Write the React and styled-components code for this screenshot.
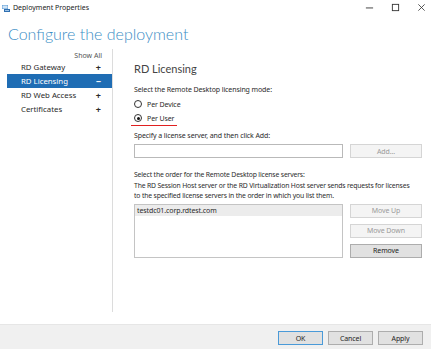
import styled, { createGlobalStyle } from 'styled-components';

const GlobalStyle = createGlobalStyle`
  html, body {
    margin: 0;
    padding: 0;
    background: #ffffff;
  }
  body {
    font-family: "Noto Sans", "Open Sans", sans-serif;
    color: #2a2a2a;
  }
`;

const navItems = [
  { label: 'RD Gateway', open: false },
  { label: 'RD Licensing', open: true },
  { label: 'RD Web Access', open: false },
  { label: 'Certificates', open: false },
];

const App = () => {
  return (
    <>
      <GlobalStyle />
      <Window>
        <TitleBar>
          <AppIcon viewBox="0 0 8 8">
            <rect x="0" y="1" width="6" height="4" fill="#5b9bd5" />
            <rect x="0.5" y="1.5" width="5" height="3" fill="#cfe3f5" />
            <rect x="2" y="5" width="6" height="3" fill="#2f6fb0" />
            <rect x="3" y="6" width="4" height="1" fill="#9cc3e8" />
          </AppIcon>
          <TitleText>Deployment Properties</TitleText>
          <Controls>
            <ControlIcon viewBox="0 0 10 10">
              <line x1="1" y1="5.5" x2="9" y2="5.5" stroke="#333" strokeWidth="1" />
            </ControlIcon>
            <ControlIcon viewBox="0 0 10 10">
              <rect x="1.5" y="1.5" width="7" height="7" fill="none" stroke="#333" strokeWidth="1" />
            </ControlIcon>
            <ControlIcon viewBox="0 0 10 10">
              <path d="M1.5 1.5 L8.5 8.5 M8.5 1.5 L1.5 8.5" stroke="#333" strokeWidth="0.9" />
            </ControlIcon>
          </Controls>
        </TitleBar>

        <Heading>Configure the deployment</Heading>

        <Main>
          <Sidebar>
            <ShowAll>Show All</ShowAll>
            {navItems.map((item) => (
              <NavRow key={item.label} $active={item.open}>
                <span>{item.label}</span>
                <NavSign>{item.open ? '−' : '+'}</NavSign>
              </NavRow>
            ))}
          </Sidebar>

          <Content>
            <SectionTitle>RD Licensing</SectionTitle>
            <Label>Select the Remote Desktop licensing mode:</Label>
            <RadioGroup>
              <RadioRow>
                <Radio />
                <span>Per Device</span>
              </RadioRow>
              <RadioRow>
                <Radio $checked />
                <span>Per User</span>
              </RadioRow>
            </RadioGroup>
            <RedMark />
            <Label $top={5}>Specify a license server, and then click Add:</Label>
            <InputRow>
              <TextInput />
              <Button $disabled>Add...</Button>
            </InputRow>
            <Paragraph>
              <span>Select the order for the Remote Desktop license servers:</span>
              <span>The RD Session Host server or the RD Virtualization Host server sends requests for licenses</span>
              <span>to the specified license servers in the order in which you list them.</span>
            </Paragraph>
            <ListRow>
              <ListBox>
                <ListItem>testdc01.corp.rdtest.com</ListItem>
              </ListBox>
              <ButtonColumn>
                <Button $disabled>Move Up</Button>
                <Button $disabled>Move Down</Button>
                <Button $strong>Remove</Button>
              </ButtonColumn>
            </ListRow>
          </Content>
        </Main>

        <Footer>
          <Button $primary $wide>OK</Button>
          <Button $wide $strong>Cancel</Button>
          <Button $wide $strong>Apply</Button>
        </Footer>
      </Window>
    </>
  );
};

const Window = styled.div`
  width: 431px;
  height: 349px;
  display: flex;
  flex-direction: column;
  overflow: hidden;
  background: #fff;
`;

const TitleBar = styled.div`
  height: 15px;
  display: flex;
  align-items: center;
  padding-left: 2px;
`;

const AppIcon = styled.svg`
  width: 8px;
  height: 8px;
  margin-right: 3px;
`;

const TitleText = styled.span`
  font-size: 7px;
  color: #222;
`;

const Controls = styled.div`
  margin-left: auto;
  display: flex;
  align-items: center;
  gap: 17px;
  padding-right: 5px;
`;

const ControlIcon = styled.svg`
  width: 9px;
  height: 9px;
`;

const Heading = styled.h1`
  margin: 8px 0 0 8px;
  font-family: Lato, "Noto Sans", sans-serif;
  font-weight: 300;
  font-size: 16px;
  line-height: 22px;
  color: #3a8dc5;
`;

const Main = styled.div`
  flex: 1;
  display: flex;
  padding-top: 4px;
  padding-bottom: 12px;
`;

const Sidebar = styled.div`
  width: 105px;
  margin-left: 7px;
  border-right: 1px solid #dcdcdc;
  display: flex;
  flex-direction: column;
  padding-top: 2px;
`;

const ShowAll = styled.div`
  align-self: flex-end;
  margin-right: 10px;
  font-size: 7px;
  line-height: 9px;
  color: #555;
`;

const NavRow = styled.div`
  height: 14px;
  display: flex;
  align-items: center;
  justify-content: space-between;
  padding: 0 11px 0 14px;
  font-size: 7.8px;
  background: ${(p) => (p.$active ? '#1f6db4' : 'transparent')};
  color: ${(p) => (p.$active ? '#fff' : '#2a2a2a')};
`;

const NavSign = styled.span`
  font-weight: 700;
  font-size: 9px;
`;

const Content = styled.div`
  flex: 1;
  padding: 13px 8px 0 21px;
  display: flex;
  flex-direction: column;
  font-size: 7px;
  letter-spacing: -0.1px;
`;

const SectionTitle = styled.h2`
  margin: 0 0 9px;
  font-family: Lato, "Noto Sans", sans-serif;
  font-weight: 400;
  font-size: 11px;
  line-height: 14px;
  letter-spacing: 0;
  color: #444;
`;

const Label = styled.div`
  line-height: 10px;
  margin-top: ${(p) => (p.$top || 0)}px;
`;

const RadioGroup = styled.div`
  display: flex;
  flex-direction: column;
  margin-top: 2px;
`;

const RadioRow = styled.div`
  display: flex;
  align-items: center;
  gap: 5px;
  height: 14px;
`;

const Radio = styled.span`
  width: 6px;
  height: 6px;
  border-radius: 50%;
  border: 1px solid #333;
  display: flex;
  align-items: center;
  justify-content: center;
  &::after {
    content: "";
    width: 3px;
    height: 3px;
    border-radius: 50%;
    background: ${(p) => (p.$checked ? '#111' : 'transparent')};
  }
`;

const RedMark = styled.div`
  width: 46px;
  height: 1px;
  background: #e02020;
  margin-left: -3px;
`;

const InputRow = styled.div`
  display: flex;
  align-items: center;
  gap: 7px;
  margin-top: 3px;
`;

const TextInput = styled.div`
  width: 207px;
  height: 12px;
  border: 1px solid #b9b9b9;
  background: #fff;
`;

const Button = styled.div`
  width: ${(p) => (p.$wide ? 43 : 70)}px;
  height: 12px;
  display: flex;
  align-items: center;
  justify-content: center;
  font-size: 7px;
  letter-spacing: -0.1px;
  background: ${(p) => (p.$disabled ? '#f4f4f4' : '#e1e1e1')};
  border: 1px solid
    ${(p) => (p.$primary ? '#4a9ad8' : p.$strong ? '#adadad' : '#d5d5d5')};
  color: ${(p) => (p.$disabled ? '#9a9a9a' : '#1e1e1e')};
`;

const Paragraph = styled.p`
  margin: 12px 0 0;
  display: flex;
  flex-direction: column;
  font-size: 6.8px;
  letter-spacing: -0.15px;
  line-height: 10.5px;
  white-space: nowrap;
`;

const ListRow = styled.div`
  display: flex;
  gap: 7px;
  margin-top: 2px;
`;

const ListBox = styled.div`
  width: 207px;
  height: 52px;
  border: 1px solid #c4c4c4;
`;

const ListItem = styled.div`
  height: 11px;
  line-height: 11px;
  padding-left: 2px;
  background: #ececec;
`;

const ButtonColumn = styled.div`
  display: flex;
  flex-direction: column;
  gap: 6px;
`;

const Footer = styled.div`
  height: 25px;
  flex-shrink: 0;
  background: #f0f0f0;
  border-top: 1px solid #e6e6e6;
  box-sizing: border-box;
  display: flex;
  justify-content: flex-end;
  align-items: flex-start;
  gap: 5px;
  padding: 6px 8px 0 0;
`;

export default App;
